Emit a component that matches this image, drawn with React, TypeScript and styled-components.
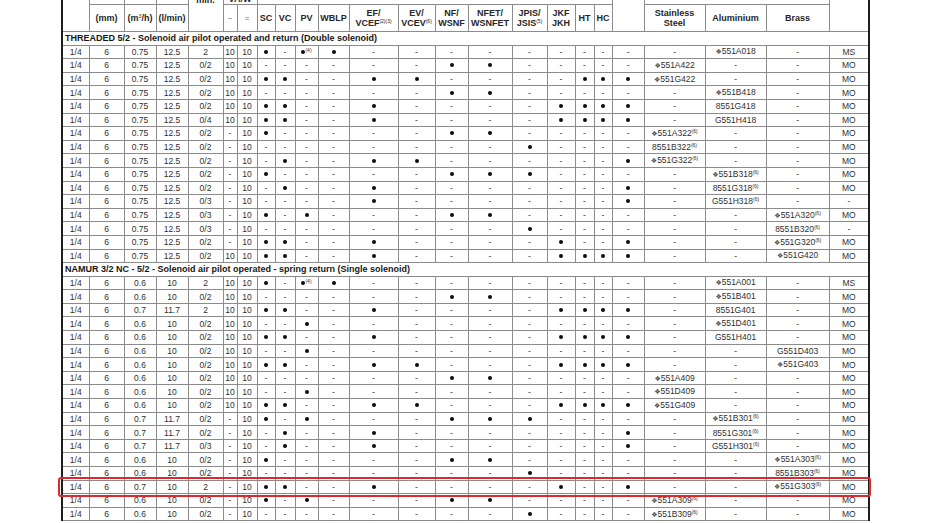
import React from 'react';
import styled, { createGlobalStyle } from 'styled-components';

// [flow m3/h, flow l/min, bar, ~, =, flags SC..X, stainless, aluminium, brass, function]
type RowData = [string, string, string, string, string, string, string, string, string, string];

const threaded: RowData[] = [
  ['0.75', '12.5', '2', '10', '10', '1041000000000', '-', '*551A018', '-', 'MS'],
  ['0.75', '12.5', '0/2', '10', '10', '0000001100000', '*551A422', '-', '-', 'MO'],
  ['0.75', '12.5', '0/2', '10', '10', '1100110000111', '*551G422', '-', '-', 'MO'],
  ['0.75', '12.5', '0/2', '10', '10', '0000001100000', '-', '*551B418', '-', 'MO'],
  ['0.75', '12.5', '0/2', '10', '10', '1100100001111', '-', '8551G418', '-', 'MO'],
  ['0.75', '12.5', '0/4', '10', '10', '1100100001111', '-', 'G551H418', '-', 'MO'],
  ['0.75', '12.5', '0/2', '-', '10', '1000001100000', '*551A322^6', '-', '-', 'MO'],
  ['0.75', '12.5', '0/2', '-', '10', '0000000010000', '8551B322^6', '-', '-', 'MO'],
  ['0.75', '12.5', '0/2', '-', '10', '0100110000001', '*551G322^6', '-', '-', 'MO'],
  ['0.75', '12.5', '0/2', '-', '10', '1000001110000', '-', '*551B318^6', '-', 'MO'],
  ['0.75', '12.5', '0/2', '-', '10', '0100100000001', '-', '8551G318^6', '-', 'MO'],
  ['0.75', '12.5', '0/3', '-', '10', '0000100000001', '-', 'G551H318^6', '-', '-'],
  ['0.75', '12.5', '0/3', '-', '10', '1010001100000', '-', '-', '*551A320^6', 'MO'],
  ['0.75', '12.5', '0/3', '-', '10', '0000000010000', '-', '-', '8551B320^6', '-'],
  ['0.75', '12.5', '0/2', '-', '10', '1100100001001', '-', '-', '*551G320^6', 'MO'],
  ['0.75', '12.5', '0/2', '10', '10', '1100100001111', '-', '-', '*551G420', 'MO'],
];

const namur: RowData[] = [
  ['0.6', '10', '2', '10', '10', '1041000000000', '-', '*551A001', '-', 'MS'],
  ['0.6', '10', '0/2', '10', '10', '0000001100000', '-', '*551B401', '-', 'MO'],
  ['0.7', '11.7', '2', '10', '10', '1100100001111', '-', '8551G401', '-', 'MO'],
  ['0.6', '10', '0/2', '10', '10', '0010000000000', '-', '*551D401', '-', 'MO'],
  ['0.6', '10', '0/2', '10', '10', '1100100001111', '-', 'G551H401', '-', 'MO'],
  ['0.6', '10', '0/2', '10', '10', '0010000000000', '-', '-', 'G551D403', 'MO'],
  ['0.6', '10', '0/2', '10', '10', '1100110001111', '-', '-', '*551G403', 'MO'],
  ['0.6', '10', '0/2', '10', '10', '0000001100000', '*551A409', '-', '-', 'MO'],
  ['0.6', '10', '0/2', '10', '10', '0010000000000', '*551D409', '-', '-', 'MO'],
  ['0.6', '10', '0/2', '10', '10', '1100110001111', '*551G409', '-', '-', 'MO'],
  ['0.7', '11.7', '0/2', '-', '10', '1010001110000', '-', '*551B301^6', '-', 'MO'],
  ['0.7', '11.7', '0/2', '-', '10', '0100100000001', '-', '8551G301^6', '-', 'MO'],
  ['0.7', '11.7', '0/3', '-', '10', '0100100000001', '-', 'G551H301^6', '-', 'MO'],
  ['0.6', '10', '0/2', '-', '10', '1000001100000', '-', '-', '*551A303^6', 'MO'],
  ['0.6', '10', '0/2', '-', '10', '0000000010000', '-', '-', '8551B303^6', 'MO'],
  ['0.7', '10', '2', '-', '10', '1100100001001', '-', '-', '*551G303^6', 'MO'],
  ['0.6', '10', '0/2', '-', '10', '1010001100000', '*551A309^6', '-', '-', 'MO'],
  ['0.6', '10', '0/2', '-', '10', '0000000010000', '*551B309^6', '-', '-', 'MO'],
];

const colWidths = [27, 35, 32, 32, 35, 14, 20, 18, 20, 23, 31, 49, 37, 33, 44, 35, 28, 19, 18, 32, 61, 61, 63, 40];

const GlobalStyle = createGlobalStyle`
  html, body {
    margin: 0;
    padding: 0;
    background: #ffffff;
    overflow: hidden;
  }
  body {
    font-family: 'Liberation Sans', Arial, sans-serif;
  }
`;

const Page = styled.div`
  position: relative;
  width: 930px;
  height: 523px;
  overflow: hidden;
  padding-left: 61px;
  box-sizing: border-box;
`;

const Table = styled.table`
  width: 807px;
  margin-top: -16px;
  border-collapse: collapse;
  table-layout: fixed;
  border-left: 2px solid #1e1e1e;
  border-right: 2px solid #1e1e1e;
  color: #2f2f2f;
  font-size: 8.5px;
`;

const TopRow = styled.tr`
  height: 20px;
`;

const HeadRow = styled.tr`
  height: 27px;
`;

const BodyRow = styled.tr`
  height: 13.6px;
`;

const HeadCell = styled.th<{ $align?: 'top' | 'bottom' | 'middle' }>`
  border: 1px solid #8c8c8c;
  padding: 0;
  font-size: 9px;
  line-height: 10px;
  font-weight: bold;
  color: #262626;
  text-align: center;
  vertical-align: ${(p) => p.$align || 'middle'};
  white-space: nowrap;
  overflow: hidden;
`;

const Symbol = styled.span`
  font-weight: normal;
  font-size: 8px;
  color: #666;
`;

const Cell = styled.td`
  border: 1px solid #8c8c8c;
  padding: 0;
  text-align: center;
  vertical-align: middle;
  line-height: 10px;
  white-space: nowrap;
`;

const SectionCell = styled.td`
  border: 1px solid #8c8c8c;
  padding: 0 0 0 2px;
  font-size: 9px;
  line-height: 10px;
  font-weight: bold;
  color: #161616;
  text-align: left;
  white-space: nowrap;
`;

const Dot = styled.span`
  display: inline-block;
  width: 4px;
  height: 4px;
  border-radius: 50%;
  background: #0c0c0c;
  vertical-align: 1px;
`;

const Sup = styled.sup`
  font-size: 5px;
  line-height: 0;
  vertical-align: 3px;
  font-weight: normal;
`;

const Diamond = styled.span`
  font-family: 'DejaVu Sans', sans-serif;
  font-size: 7px;
  color: #4a4a4a;
`;

const Highlight = styled.div`
  position: absolute;
  left: 58px;
  top: 477px;
  width: 813px;
  height: 20px;
  box-sizing: border-box;
  border: 2px solid #dc2a2c;
  border-radius: 3px;
  pointer-events: none;
`;

const Code = ({ value }: { value: string }) => {
  if (value === '-') return <>-</>;
  const diamond = value.startsWith('*');
  const [base, note] = (diamond ? value.slice(1) : value).split('^');
  return (
    <>
      {diamond && <Diamond>❖</Diamond>}
      {base}
      {note && <Sup>({note})</Sup>}
    </>
  );
};

// a filled dot marks an available option
const Flag = ({ f }: { f: string }) => {
  if (f === '0') return <>-</>;
  return (
    <>
      <Dot />
      {f === '4' && <Sup>(4)</Sup>}
    </>
  );
};

const DataRow = ({ row }: { row: RowData }) => {
  const [flow, lmin, bar, ac, dc, flags, ss, al, br, fn] = row;
  return (
    <BodyRow>
      <Cell>1/4</Cell>
      <Cell>6</Cell>
      <Cell>{flow}</Cell>
      <Cell>{lmin}</Cell>
      <Cell>{bar}</Cell>
      <Cell>{ac}</Cell>
      <Cell>{dc}</Cell>
      {flags.split('').map((f, i) => (
        <Cell key={i}>
          <Flag f={f} />
        </Cell>
      ))}
      <Cell>
        <Code value={ss} />
      </Cell>
      <Cell>
        <Code value={al} />
      </Cell>
      <Cell>
        <Code value={br} />
      </Cell>
      <Cell>{fn}</Cell>
    </BodyRow>
  );
};

const Section = ({ title }: { title: string }) => (
  <BodyRow>
    <SectionCell colSpan={24}>{title}</SectionCell>
  </BodyRow>
);

export default function App() {
  return (
    <Page>
      <GlobalStyle />
      <Table>
        <colgroup>
          {colWidths.map((w, i) => (
            <col key={i} style={{ width: w }} />
          ))}
        </colgroup>
        <thead>
          <TopRow>
            <HeadCell rowSpan={2} />
            <HeadCell />
            <HeadCell />
            <HeadCell />
            <HeadCell rowSpan={2} $align="top">
              bar
              <br />
              min.
            </HeadCell>
            <HeadCell colSpan={2} $align="bottom">
              VA/W
            </HeadCell>
            <HeadCell colSpan={12} />
            <HeadCell rowSpan={2} />
            <HeadCell colSpan={3} />
            <HeadCell rowSpan={2} />
          </TopRow>
          <HeadRow>
            <HeadCell>(mm)</HeadCell>
            <HeadCell>
              (m<Sup>3</Sup>/h)
            </HeadCell>
            <HeadCell>(l/min)</HeadCell>
            <HeadCell>
              <Symbol>~</Symbol>
            </HeadCell>
            <HeadCell>
              <Symbol>=</Symbol>
            </HeadCell>
            <HeadCell>SC</HeadCell>
            <HeadCell>VC</HeadCell>
            <HeadCell>PV</HeadCell>
            <HeadCell>WBLP</HeadCell>
            <HeadCell>
              EF/
              <br />
              VCEF<Sup>(2)(3)</Sup>
            </HeadCell>
            <HeadCell>
              EV/
              <br />
              VCEV<Sup>(6)</Sup>
            </HeadCell>
            <HeadCell>
              NF/
              <br />
              WSNF
            </HeadCell>
            <HeadCell>
              NFET/
              <br />
              WSNFET
            </HeadCell>
            <HeadCell>
              JPIS/
              <br />
              JSIS<Sup>(5)</Sup>
            </HeadCell>
            <HeadCell>
              JKF
              <br />
              JKH
            </HeadCell>
            <HeadCell>HT</HeadCell>
            <HeadCell>HC</HeadCell>
            <HeadCell>
              Stainless
              <br />
              Steel
            </HeadCell>
            <HeadCell>Aluminium</HeadCell>
            <HeadCell>Brass</HeadCell>
          </HeadRow>
        </thead>
        <tbody>
          <Section title="THREADED 5/2 - Solenoid air pilot operated and return (Double solenoid)" />
          {threaded.map((r, i) => (
            <DataRow key={`t${i}`} row={r} />
          ))}
          <Section title="NAMUR 3/2 NC - 5/2 - Solenoid air pilot operated - spring return (Single solenoid)" />
          {namur.map((r, i) => (
            <DataRow key={`n${i}`} row={r} />
          ))}
        </tbody>
      </Table>
      <Highlight />
    </Page>
  );
}
